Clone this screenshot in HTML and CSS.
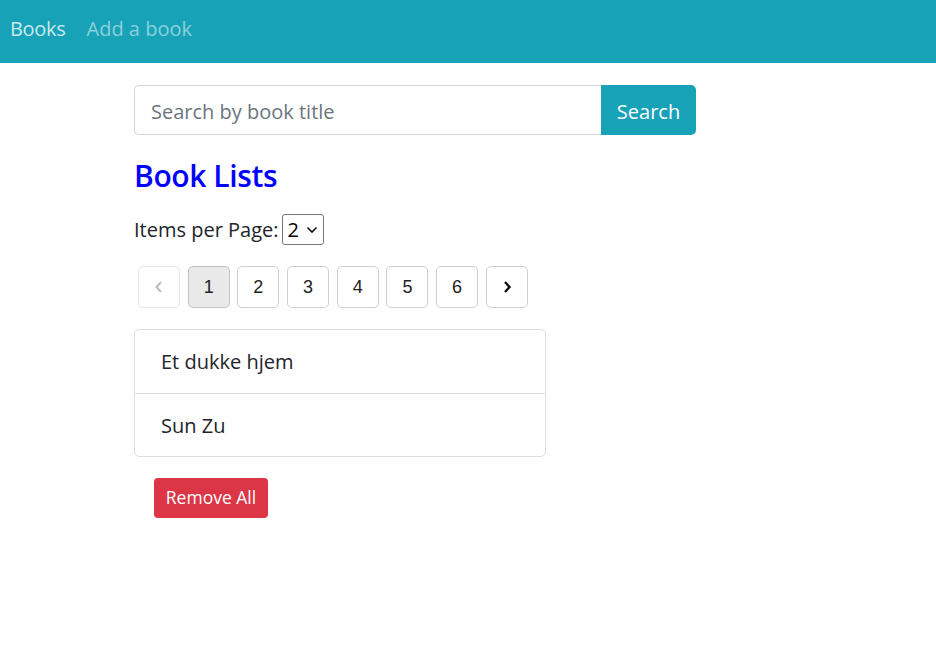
FILE: index.html
```html
<!DOCTYPE html>
<html>
<head>
<meta charset="utf-8">
<link rel="stylesheet" href="styles.css">
</head>
<body>
<nav class="navbar">
  <a class="nav-link active" href="#">Books</a>
  <a class="nav-link" href="#">Add a book</a>
</nav>
<main class="container">
  <div class="search-group">
    <input class="search-input" type="text" placeholder="Search by book title">
    <button class="search-btn" type="button">Search</button>
  </div>
  <h4 class="title">Book Lists</h4>
  <div class="per-page">
    <span>Items per Page:</span>
    <span class="select-wrap">
      <select class="select">
        <option>2</option>
      </select>
      <svg class="select-arrow" width="12" height="8" viewBox="0 0 12 8"><path d="M1.5 1.5 L6 6 L10.5 1.5" fill="none" stroke="#111" stroke-width="1.6"/></svg>
    </span>
  </div>
  <ul class="pagination">
    <li class="page disabled"><svg width="10" height="14" viewBox="0 0 10 14"><path d="M7 2 L2.5 7 L7 12" fill="none" stroke="#bbb" stroke-width="2"/></svg></li>
    <li class="page current">1</li>
    <li class="page">2</li>
    <li class="page">3</li>
    <li class="page">4</li>
    <li class="page">5</li>
    <li class="page">6</li>
    <li class="page"><svg width="10" height="14" viewBox="0 0 10 14"><path d="M3 2 L7.5 7 L3 12" fill="none" stroke="#111" stroke-width="2.4"/></svg></li>
  </ul>
  <ul class="list-group">
    <li class="list-item">Et dukke hjem</li>
    <li class="list-item">Sun Zu</li>
  </ul>
  <button class="btn-danger" type="button">Remove All</button>
</main>
</body>
</html>
```
FILE: styles.css
```css
* { box-sizing: border-box; }
html, body { margin: 0; padding: 0; }
body {
  font-family: "Segoe UI", "Open Sans", "Noto Sans", sans-serif;
  font-size: 20px;
  color: #212529;
  background: #fff;
}
.navbar {
  height: 63px;
  background: #17a2b8;
  display: flex;
  align-items: center;
  padding: 0 10px;
  gap: 21px;
}
.nav-link {
  text-decoration: none;
  font-size: 20px;
  color: rgba(255,255,255,0.5);
  line-height: 30px;
  padding-bottom: 6px;
}
.nav-link.active { color: rgba(255,255,255,0.78); letter-spacing: -0.3px; }
.container {
  width: 562px;
  margin-left: 134px;
  padding-top: 22px;
}
.search-group {
  display: flex;
  height: 50px;
}
.search-input {
  flex: 1;
  font: inherit;
  font-size: 20px;
  border: 1px solid #ced4da;
  border-right: none;
  border-radius: 5px 0 0 5px;
  padding: 3px 16px 0;
  color: #495057;
  outline: none;
}
.search-input::placeholder { color: #6c757d; }
.search-btn {
  width: 95px;
  font: inherit;
  font-size: 20px;
  border: none;
  background: #17a2b8;
  color: #fff;
  border-radius: 0 5px 5px 0;
  padding: 3px 0 0;
}
.title {
  margin: 23px 0 0;
  font-size: 30px;
  font-weight: 600;
  letter-spacing: -0.4px;
  color: #0000ff;
  line-height: 36px;
}
.per-page {
  margin-top: 20px;
  display: flex;
  align-items: center;
  gap: 3px;
  line-height: 30px;
}
.select-wrap { position: relative; display: inline-block; height: 31px; }
.select {
  appearance: none;
  -webkit-appearance: none;
  font: inherit;
  font-size: 20px;
  height: 31px;
  width: 42px;
  border: 1px solid #767676;
  border-radius: 3px;
  background: #fff;
  color: #000;
  padding: 0 0 0 5px;
  line-height: 29px;
}
.select-arrow {
  position: absolute;
  right: 6px;
  top: 12px;
  pointer-events: none;
}
.pagination {
  list-style: none;
  margin: 21px 0 0 4px;
  padding: 0;
  display: flex;
  gap: 7.7px;
}
.page {
  width: 42px;
  height: 42px;
  border: 1px solid #cfcfcf;
  border-radius: 5px;
  display: flex;
  align-items: center;
  justify-content: center;
  font-family: "Liberation Sans", Arial, sans-serif;
  font-size: 18px;
  color: #222;
  background: #fff;
}
.page.disabled { border-color: #e6e6e6; }
.page.current { background: #e9e9e9; border-color: #c2c2c2; }
.list-group {
  list-style: none;
  margin: 21px 0 0;
  padding: 0;
  width: 412px;
  border: 1px solid #dfdfdf;
  border-radius: 5px;
}
.list-item {
  height: 63px;
  padding: 0 26px;
  display: flex;
  align-items: center;
}
.list-item + .list-item { border-top: 1px solid #dfdfdf; }
.btn-danger {
  margin: 21px 0 0 20px;
  font: inherit;
  font-size: 17.5px;
  background: #dc3545;
  color: #fff;
  border: none;
  border-radius: 4px;
  width: 114px;
  height: 40px;
  padding: 0 0 2px;
}
```
